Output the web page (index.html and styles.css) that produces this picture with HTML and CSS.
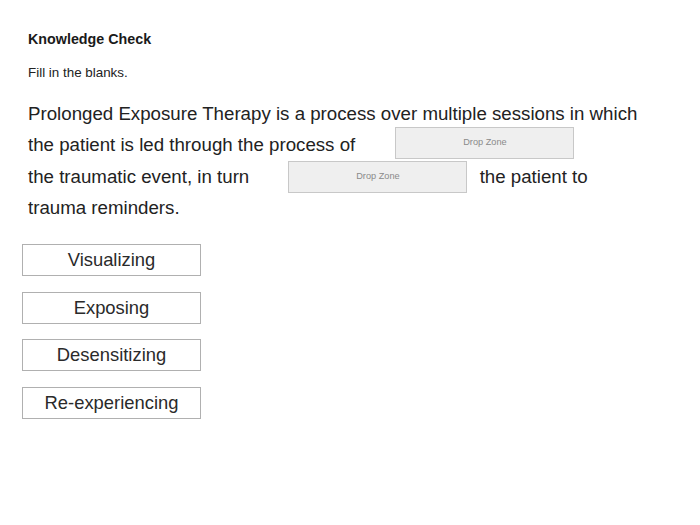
FILE: index.html
```html
<!DOCTYPE html>
<html>
<head>
<meta charset="utf-8">
<link rel="stylesheet" href="styles.css">
</head>
<body>
<div class="page">
  <div class="head">
    <div class="title">Knowledge Check</div>
    <div class="instr">Fill in the blanks.</div>
  </div>
  <p class="question">Prolonged Exposure Therapy is a process over multiple sessions in which<br>the patient is led through the process of <span class="drop d1">Drop Zone</span><br>the traumatic event, in turn <span class="drop d2">Drop Zone</span> the patient to<br>trauma reminders.</p>
  <div class="choices">
    <div class="choice">Visualizing</div>
    <div class="choice">Exposing</div>
    <div class="choice">Desensitizing</div>
    <div class="choice">Re-experiencing</div>
  </div>
</div>
</body>
</html>
```
FILE: styles.css
```css
html, body {
  margin: 0;
  padding: 0;
  background: #ffffff;
}
body {
  font-family: "Liberation Sans", Arial, sans-serif;
  color: #222222;
  width: 700px;
  height: 525px;
  overflow: hidden;
}
.page {
  padding: 31px 0 0 22px;
}
.head {
  padding-left: 6px;
}
.title {
  font-size: 14.3px;
  font-weight: bold;
  line-height: 16px;
  color: #1a1a1a;
}
.instr {
  font-size: 13.4px;
  line-height: 15px;
  margin-top: 17.5px;
  color: #222;
}
.question {
  margin: 18px 0 0 0;
  padding-left: 6px;
  font-size: 18.7px;
  line-height: 31.5px;
  color: #222;
}
.drop {
  display: inline-block;
  box-sizing: border-box;
  width: 179px;
  height: 32px;
  margin-top: -6px;
  margin-bottom: -6px;
  border: 1.5px solid #c8c8c8;
  background: #efefef;
  font-size: 9.2px;
  line-height: 29px;
  color: #8a8a8a;
  text-align: center;
  vertical-align: middle;
}
.d1 {
  margin-left: 35px;
  position: relative;
  top: -3px;
}
.d2 {
  margin-left: 34px;
  margin-right: 7px;
  position: relative;
  top: -1px;
}
.choices {
  margin-top: 20.5px;
  display: flex;
  flex-direction: column;
  gap: 15.5px;
}
.choice {
  box-sizing: border-box;
  width: 179px;
  height: 32px;
  border: 1.5px solid #b0b0b0;
  font-size: 18.4px;
  line-height: 29px;
  text-align: center;
  color: #2a2a2a;
}
```
